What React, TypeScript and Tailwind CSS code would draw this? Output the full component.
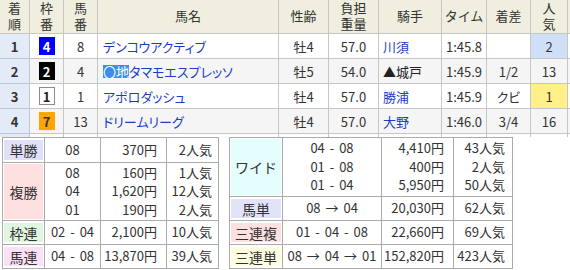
import React from "react";

type Row = {
  rank: string;
  waku: string;
  wakuCls: string;
  num: string;
  name: React.ReactNode;
  sex: string;
  wt: string;
  jockey: string;
  jLink: boolean;
  time: string;
  diff: string;
  pop: string;
  popCls: string;
  bg: string;
};

const rows: Row[] = [
  {
    rank: "1",
    waku: "4",
    wakuCls: "bg-[#0000ff] text-white",
    num: "8",
    name: "デンコウアクティブ",
    sex: "牡4",
    wt: "57.0",
    jockey: "川須",
    jLink: true,
    time: "1:45.8",
    diff: "",
    pop: "2",
    popCls: "bg-[#cfdff8]",
    bg: "bg-white",
  },
  {
    rank: "2",
    waku: "2",
    wakuCls: "bg-black text-white",
    num: "4",
    name: (
      <>
        <span className="bg-[#3d8ee6] text-white">〇地</span>タマモエスプレッソ
      </>
    ),
    sex: "牡5",
    wt: "54.0",
    jockey: "▲城戸",
    jLink: false,
    time: "1:45.9",
    diff: "1/2",
    pop: "13",
    popCls: "bg-[#f5f5f5]",
    bg: "bg-[#f5f5f5]",
  },
  {
    rank: "3",
    waku: "1",
    wakuCls: "bg-white text-[#222] border border-[#8a8a8a]",
    num: "1",
    name: "アポロダッシュ",
    sex: "牡4",
    wt: "57.0",
    jockey: "勝浦",
    jLink: true,
    time: "1:45.9",
    diff: "クビ",
    pop: "1",
    popCls: "bg-[#fff08a]",
    bg: "bg-white",
  },
  {
    rank: "4",
    waku: "7",
    wakuCls: "bg-[#ffa500] text-[#333]",
    num: "13",
    name: "ドリームリーグ",
    sex: "牡4",
    wt: "57.0",
    jockey: "大野",
    jLink: true,
    time: "1:46.0",
    diff: "3/4",
    pop: "16",
    popCls: "bg-[#f5f5f5]",
    bg: "bg-[#f5f5f5]",
  },
];

const headers: React.ReactNode[] = [
  <>着<br />順</>,
  <>枠<br />番</>,
  <>馬<br />番</>,
  "馬名",
  "性齢",
  <>負担<br />重量</>,
  "騎手",
  "タイム",
  "着差",
  <>人<br />気</>,
  "",
];

type Pay = {
  label: string;
  color: string;
  tall?: boolean;
  combos: string[];
  amounts: string[];
  pops: string[];
};

const leftPays: Pay[] = [
  { label: "単勝", color: "bg-[#e0e0f8]", combos: ["08"], amounts: ["370円"], pops: ["2人気"] },
  {
    label: "複勝",
    color: "bg-[#fee0e0]",
    tall: true,
    combos: ["08", "04", "01"],
    amounts: ["160円", "1,620円", "190円"],
    pops: ["1人気", "12人気", "2人気"],
  },
  { label: "枠連", color: "bg-[#e0f6e0]", combos: ["02 - 04"], amounts: ["2,100円"], pops: ["10人気"] },
  { label: "馬連", color: "bg-[#fce0f8]", combos: ["04 - 08"], amounts: ["13,870円"], pops: ["39人気"] },
];

const rightPays: Pay[] = [
  {
    label: "ワイド",
    color: "bg-[#e4fdfd]",
    tall: true,
    combos: ["04 - 08", "01 - 08", "01 - 04"],
    amounts: ["4,410円", "400円", "5,950円"],
    pops: ["43人気", "2人気", "50人気"],
  },
  { label: "馬単", color: "bg-[#e2e2fa]", combos: ["08 → 04"], amounts: ["20,030円"], pops: ["62人気"] },
  { label: "三連複", color: "bg-[#fde0e0]", combos: ["01 - 04 - 08"], amounts: ["22,660円"], pops: ["69人気"] },
  { label: "三連単", color: "bg-[#fdfde0]", combos: ["08 → 04 → 01"], amounts: ["152,820円"], pops: ["423人気"] },
];

function Lines({ items }: { items: string[] }) {
  return (
    <>
      {items.map((t, i) => (
        <div key={i} className="leading-[18.5px] whitespace-nowrap">
          {t}
        </div>
      ))}
    </>
  );
}

function PayTable({ pays, cols, rowsCls, amtPad, popPad }: { pays: Pay[]; cols: string; rowsCls: string; amtPad: string; popPad: string }) {
  return (
    <div className={`grid ${cols} ${rowsCls} gap-px bg-[#ababab] border border-[#ababab]`}>
      {pays.map((p) => (
        <React.Fragment key={p.label}>
          <div className={`bg-white px-[1px] ${p.tall ? "py-[1px]" : "py-[2px]"}`}>
            <div className={`h-full ${p.color} flex items-center justify-center text-[14px] text-[#333]`}>{p.label}</div>
          </div>
          <div className="bg-white flex flex-col justify-center items-center [word-spacing:2px]">
            <Lines items={p.combos} />
          </div>
          <div className={`bg-white flex flex-col justify-center items-end ${amtPad}`}>
            <Lines items={p.amounts} />
          </div>
          <div className={`bg-white flex flex-col justify-center items-end ${popPad}`}>
            <Lines items={p.pops} />
          </div>
        </React.Fragment>
      ))}
    </div>
  );
}

export default function App() {
  return (
    <div className="w-[570px] h-[270px] overflow-hidden bg-white text-[13px] text-[#333] font-['Noto_Sans_CJK_JP',sans-serif] leading-none">
      <div className="h-[137px] overflow-hidden">
        <div className="grid w-[600px] grid-cols-[29px_33px_33px_180px_49px_49px_62px_44px_43px_36px_1fr] grid-rows-[33px_24px_24px_24px_24px_24px] gap-px bg-[#c6c6c6]">
          {headers.map((h, i) => (
            <div
              key={i}
              className="bg-[#efeedf] flex items-center justify-center text-center leading-[16px] text-[#333] font-['Liberation_Sans','Noto_Sans_CJK_JP',sans-serif]"
            >
              {h}
            </div>
          ))}
          {rows.map((r) => (
            <React.Fragment key={r.rank}>
              <div className="bg-[#e3ebf8] flex items-center justify-center font-bold text-[#333]">{r.rank}</div>
              <div className={`${r.bg} flex items-center justify-center`}>
                <span className={`w-[16px] h-[18px] flex items-center justify-center font-bold ${r.wakuCls}`}>{r.waku}</span>
              </div>
              <div className={`${r.bg} flex items-center justify-center`}>{r.num}</div>
              <div className={`${r.bg} flex items-center pl-[5px] text-[#1b3dc6] [font-feature-settings:'palt'] whitespace-nowrap`}>{r.name}</div>
              <div className={`${r.bg} flex items-center justify-center`}>{r.sex}</div>
              <div className={`${r.bg} flex items-center justify-center`}>{r.wt}</div>
              <div className={`${r.bg} flex items-center pl-[4px] ${r.jLink ? "text-[#1b3dc6]" : "text-[#222]"}`}>{r.jockey}</div>
              <div className={`${r.bg} flex items-center justify-center`}>{r.time}</div>
              <div className={`${r.bg} flex items-center justify-center [font-feature-settings:'palt']`}>{r.diff}</div>
              <div className={`${r.popCls} flex items-center justify-center`}>{r.pop}</div>
              <div className={`${r.bg}`}></div>
            </React.Fragment>
          ))}
          {Array.from({ length: 11 }).map((_, i) => (
            <div key={`e${i}`} className={i === 0 ? "bg-[#e3ebf8]" : "bg-white"}></div>
          ))}
        </div>
      </div>
      <div className="flex items-start pl-[2px] gap-[10px]">
        <PayTable
          pays={leftPays}
          cols="grid-cols-[41px_55px_65px_51px]"
          rowsCls="grid-rows-[24px_57px_23px_23px]"
          amtPad="pr-[9px]"
          popPad="pr-[6px]"
        />
        <PayTable
          pays={rightPays}
          cols="grid-cols-[52px_98px_71px_58px]"
          rowsCls="grid-rows-[58px_23px_23px_23px]"
          amtPad="pr-[9px]"
          popPad="pr-[7px]"
        />
      </div>
    </div>
  );
}
